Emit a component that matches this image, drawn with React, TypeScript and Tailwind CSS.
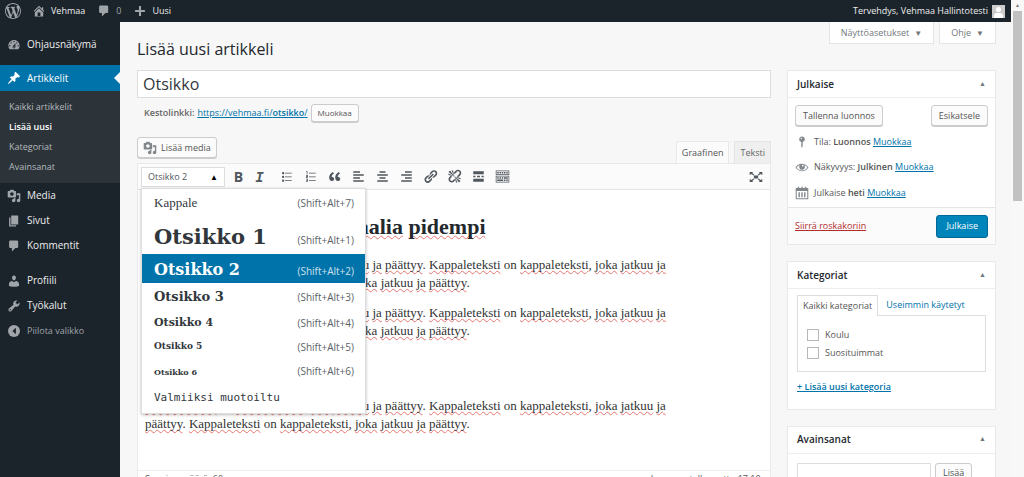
import type { ReactNode } from 'react'
import { FaCaretLeft } from 'react-icons/fa'

const icons = {
  wordpress:
    'M20 10c0-5.51-4.49-10-10-10C4.48 0 0 4.49 0 10c0 5.52 4.48 10 10 10 5.51 0 10-4.48 10-10zM7.78 15.37L4.37 6.22c.55-.02 1.17-.08 1.17-.08.5-.06.44-1.13-.06-1.11 0 0-1.45.11-2.37.11-.18 0-.37 0-.58-.01C4.12 2.69 6.87 1.11 10 1.11c2.33 0 4.45.87 6.05 2.34-.68-.11-1.65.39-1.65 1.58 0 .74.45 1.36.9 2.1.35.61.55 1.36.55 2.46 0 1.49-1.4 5-1.4 5l-3.03-8.37c.54-.02.82-.17.82-.17.5-.05.44-1.25-.06-1.22 0 0-1.44.12-2.38.12-.87 0-2.33-.12-2.33-.12-.5-.03-.56 1.2-.06 1.22l.92.08 1.26 3.41zM17.41 10c.24-.64.74-1.87.43-4.25.7 1.29 1.05 2.71 1.05 4.25 0 3.29-1.73 6.24-4.4 7.78.97-2.59 1.94-5.2 2.92-7.78zM6.1 18.09C3.12 16.65 1.11 13.53 1.11 10c0-1.3.23-2.48.72-3.59C3.25 10.3 4.67 14.2 6.1 18.09zm4.03-6.63l2.58 6.98c-.86.29-1.76.45-2.71.45-.79 0-1.57-.11-2.29-.33.81-2.38 1.62-4.74 2.42-7.1z',
  home: 'M16 8.5l1.53 1.53-1.06 1.06L10 4.6l-6.47 6.49-1.06-1.06L10 2.5l4 4v-2h2v4zm-6-2.46l6 5.99V18H4v-5.97zM12 17v-5H8v5h4z',
  comments: 'M5 2h9c1.1 0 2 .9 2 2v7c0 1.1-.9 2-2 2h-2l-5 5v-5H5c-1.1 0-2-.9-2-2V4c0-1.1.9-2 2-2z',
  plus: 'M17 8.5v3h-5.5V17h-3v-5.5H3v-3h5.5V3h3v5.5H17z',
  dashboard:
    'M3.76 16h12.48c1.1-1.37 1.76-3.11 1.76-5 0-4.42-3.58-8-8-8s-8 3.58-8 8c0 1.89.66 3.63 1.76 5zM10 4c.55 0 1 .45 1 1s-.45 1-1 1-1-.45-1-1 .45-1 1-1zM6 6c.55 0 1 .45 1 1s-.45 1-1 1-1-.45-1-1 .45-1 1-1zm8 0c.55 0 1 .45 1 1s-.45 1-1 1-1-.45-1-1 .45-1 1-1zm-5.37 5.55L12 7v6c0 1.1-.9 2-2 2s-2-.9-2-2c0-.57.24-1.08.63-1.45zM4 10c.55 0 1 .45 1 1s-.45 1-1 1-1-.45-1-1 .45-1 1-1zm12 0c.55 0 1 .45 1 1s-.45 1-1 1-1-.45-1-1 .45-1 1-1zm-5 3c0-.55-.45-1-1-1s-1 .45-1 1 .45 1 1 1 1-.45 1-1z',
  post: 'M10.44 3.02l1.82-1.82 6.36 6.35-1.83 1.82c-1.05-.68-2.48-.57-3.41.36l-.75.75c-.92.93-1.04 2.35-.35 3.41l-1.83 1.82-2.41-2.41-2.8 2.79c-.42.42-3.38 2.71-3.8 2.29s1.86-3.39 2.28-3.81l2.79-2.79L4.1 9.36l1.83-1.82c1.05.69 2.48.57 3.4-.36l.75-.75c.93-.92 1.05-2.35.36-3.41z',
  media:
    'M13 11V4c0-.55-.45-1-1-1h-1.67L9 1H5L3.67 3H2c-.55 0-1 .45-1 1v7c0 .55.45 1 1 1h10c.55 0 1-.45 1-1zM7 4.5c1.38 0 2.5 1.12 2.5 2.5S8.38 9.5 7 9.5 4.5 8.38 4.5 7 5.62 4.5 7 4.5zM14 6h5v10.5c0 1.38-1.12 2.5-2.5 2.5S14 17.88 14 16.5s1.12-2.5 2.5-2.5c.17 0 .34.02.5.05V9h-3V6zm-4 8.05V13h2v3.5c0 1.38-1.12 2.5-2.5 2.5S7 17.88 7 16.5 8.12 14 9.5 14c.17 0 .34.02.5.05z',
  page: 'M6 15V2h10v13H6zm-1 1h8v2H3V5h2v11z',
  users:
    'M10 9.25c-2.27 0-2.73-3.44-2.73-3.44C7 4.02 7.82 2 9.97 2c2.16 0 2.98 2.02 2.71 3.81 0 0-.41 3.44-2.68 3.44zm0 2.57L12.72 10c2.39 0 4.52 2.33 4.52 4.53v2.49s-3.65 1.13-7.24 1.13c-3.65 0-7.24-1.13-7.24-1.13v-2.49c0-2.25 1.94-4.48 4.47-4.48z',
  tools:
    'M16.68 9.77c-1.34 1.34-3.3 1.67-4.95.99l-5.41 6.52c-.99.99-2.59.99-3.58 0s-.99-2.59 0-3.57l6.52-5.42c-.68-1.65-.35-3.61.99-4.95 1.28-1.28 3.12-1.62 4.72-1.06l-2.89 2.89 2.82 2.82 2.86-2.87c.53 1.58.18 3.39-1.08 4.65zM3.81 16.21c.4.39 1.04.39 1.43 0 .4-.4.4-1.04 0-1.43-.39-.4-1.03-.4-1.43 0-.39.39-.39 1.03 0 1.43z',
  ul: 'M5.5 7C4.67 7 4 6.33 4 5.5 4 4.68 4.67 4 5.5 4 6.32 4 7 4.68 7 5.5 7 6.33 6.32 7 5.5 7zM8 5h9v1H8V5zm-2.5 7c-.83 0-1.5-.67-1.5-1.5C4 9.68 4.67 9 5.5 9c.82 0 1.5.68 1.5 1.5 0 .83-.68 1.5-1.5 1.5zM8 10h9v1H8v-1zm-2.5 7c-.83 0-1.5-.67-1.5-1.5 0-.82.67-1.5 1.5-1.5.82 0 1.5.68 1.5 1.5 0 .83-.68 1.5-1.5 1.5zM8 15h9v1H8v-1z',
  ol: 'M5 3h1v4H5V4H4V3zM8 5h9v1H8zM4 8h2.500v2.500H5v.5h1.500v1H4V9.500h1.500V9H4zM8 10h9v1H8zM4 13h2.500v4H4v-1h1.500v-.5H4.500v-1h1V14H4zM8 15h9v1H8z',
  quote:
    'M9.49 13.22c0-.74-.2-1.38-.61-1.9-.62-.78-1.83-.88-2.53-.72-.29-1.65 1.11-3.75 2.92-4.65L7.88 4c-2.73 1.3-5.42 4.28-4.96 8.05C3.21 14.43 4.59 16 6.54 16c.85 0 1.56-.25 2.12-.75s.83-1.18.83-2.03zm8.05 0c0-.74-.2-1.38-.61-1.9-.63-.78-1.83-.88-2.53-.72-.29-1.65 1.11-3.75 2.92-4.65L15.93 4c-2.73 1.3-5.41 4.28-4.95 8.05.29 2.38 1.66 3.95 3.61 3.95.85 0 1.56-.25 2.12-.75s.83-1.18.83-2.03z',
  alignLeft: 'M12 5V3H3v2h9zm5 4V7H3v2h14zm-5 4v-2H3v2h9zm5 4v-2H3v2h14z',
  alignCenter: 'M14 5V3H6v2h8zm3 4V7H3v2h14zm-3 4v-2H6v2h8zm3 4v-2H3v2h14z',
  alignRight: 'M17 5V3H8v2h9zm0 4V7H3v2h14zm0 4v-2H8v2h9zm0 4v-2H3v2h14z',
  link: 'M17.74 2.76c1.68 1.69 1.68 4.41 0 6.1l-1.53 1.52c-1.12 1.12-2.7 1.47-4.14 1.09l2.62-2.61.76-.77.76-.76c.84-.84.84-2.2 0-3.04-.84-.85-2.2-.85-3.04 0l-.77.76-3.38 3.38c-.37-1.44-.02-3.02 1.1-4.14l1.52-1.53c1.69-1.68 4.42-1.68 6.1 0zM8.59 13.43l5.34-5.34c.42-.42.42-1.1 0-1.52-.44-.43-1.13-.39-1.53 0l-5.33 5.34c-.42.42-.42 1.1 0 1.52.44.43 1.13.39 1.52 0zm-.76 2.29l4.14-4.15c.38 1.44.03 3.02-1.09 4.14l-1.52 1.53c-1.69 1.68-4.41 1.68-6.1 0-1.68-1.68-1.68-4.42 0-6.1l1.53-1.52c1.12-1.12 2.7-1.47 4.14-1.1l-4.14 4.15c-.85.84-.85 2.2 0 3.05.84.84 2.2.84 3.04 0z',
  unlink:
    'M17.74 2.26c1.68 1.69 1.68 4.41 0 6.1l-1.53 1.52c-.32.33-.69.58-1.08.77L13 10l1.69-1.64.76-.77.76-.76c.84-.84.84-2.2 0-3.04-.84-.85-2.2-.85-3.04 0l-.77.76-.76.76L10 7l-.65-2.14c.19-.38.44-.75.77-1.07l1.52-1.53c1.69-1.68 4.42-1.68 6.1 0zM2 4l8 6-6-8zm4-2l4 8-2-8H6zM2 6l8 4-8-2V6zm7.36 7.69L10 13l.74 2.35-1.38 1.39c-1.69 1.68-4.41 1.68-6.1 0-1.68-1.68-1.68-4.42 0-6.1l1.39-1.38L7 10l-.69.64-1.52 1.53c-.85.84-.85 2.2 0 3.04.84.85 2.2.85 3.04 0zM18 16l-8-6 6 8zm-4 2l-4-8 2 8h2zm4-4l-8-4 8 2v2z',
  more: 'M17 7V3H3v4h14zM6 11V9H3v2h3zm6 0V9H8v2h4zm5 0V9h-3v2h3zm0 6v-4H3v4h14z',
  kitchensink:
    'M19 2v6H1V2h18zm-1 5V3H2v4h16zM5 4v2H3V4h2zm3 0v2H6V4h2zm3 0v2H9V4h2zm3 0v2h-2V4h2zm3 0v2h-2V4h2zm2 5v9H1V9h18zm-1 8v-7H2v7h16zM5 11v2H3v-2h2zm3 0v2H6v-2h2zm3 0v2H9v-2h2zm6 0v2h-5v-2h5zm-6 3v2H3v-2h8zm3 0v2h-2v-2h2zm3 0v2h-2v-2h2z',
  fullscreen:
    'M7 8h6v4H7zM1 3h5L4.600 4.400 7.500 6.800 6.500 8 3.300 5.600 1 7zM19 3h-5l1.400 1.400-2.900 2.400 1 1.200 3.200-2.400L19 7zM1 17h5l-1.400-1.400 2.900-2.400-1-1.200-3.200 2.400L1 13zM19 17h-5l1.400-1.400-2.900-2.400 1-1.200 3.200 2.400L19 13z',
  status:
    'M14 6c0 1.860-1.280 3.410-3 3.860V16c0 1-2 2-2 2V9.860c-1.720-.45-3-2-3-3.860 0-2.210 1.790-4 4-4s4 1.790 4 4zM8 5c0 .55.45 1 1 1s1-.45 1-1-.45-1-1-1-1 .45-1 1z',
  visibility:
    'M18.3 9.500C15 4.900 8.500 3.800 3.900 7.200c-1.200.9-2.200 2.100-3 3.400.2.4.5.8.8 1.200 3.300 4.600 9.600 5.600 14.200 2.400.9-.7 1.700-1.400 2.400-2.400.3-.4.5-.8.8-1.200-.3-.4-.5-.8-.8-1.100zm-8.200-2.300c.5-.5 1.300-.5 1.800 0s.5 1.300 0 1.800-1.300.5-1.800 0-.5-1.300 0-1.800zm-.1 7.700c-3.100 0-6-1.600-7.700-4.200C3.500 9 5.100 7.800 7 7.200c-.7.8-1 1.700-1 2.700 0 2.200 1.700 4.100 4 4.100 2.200 0 4.100-1.700 4.100-4v-.1c0-1-.4-2-1.100-2.700 1.900.6 3.500 1.800 4.700 3.500-1.700 2.600-4.600 4.200-7.700 4.200z',
  calendar:
    'M4 1h2v2h3V1h2v2h3V1h2v2h3v16H1V3h3zM2.500 7v10.500h15V7zM5 9h2v7H5zM9 9h2v7H9zM13 9h2v7h-2z',
}

type IconName = keyof typeof icons

function Icon({ name, className }: { name: IconName; className: string }) {
  return (
    <svg viewBox="0 0 20 20" fill="currentColor" fillRule="evenodd" aria-hidden="true" className={`shrink-0 ${className}`}>
      <path d={icons[name]} />
    </svg>
  )
}

const subMenu = [
  { label: 'Kaikki artikkelit' },
  { label: 'Lisää uusi', current: true },
  { label: 'Kategoriat' },
  { label: 'Avainsanat' },
]

const formats = [
  { label: 'Kappale', keys: '(Shift+Alt+7)', row: 'h-[28px] items-center', text: 'font-[Liberation_Serif,serif] text-[13px]' },
  { label: 'Otsikko 1', keys: '(Shift+Alt+1)', row: 'h-[37px] items-baseline pt-[4px]', text: 'font-[DejaVu_Serif,serif] font-bold text-[21px]' },
  { label: 'Otsikko 2', keys: '(Shift+Alt+2)', row: 'h-[29px] items-baseline pt-[4px] bg-[#0073aa] text-white', text: 'font-[DejaVu_Serif,serif] font-bold text-[16px]' },
  { label: 'Otsikko 3', keys: '(Shift+Alt+3)', row: 'h-[28px] items-center', text: 'font-[DejaVu_Serif,serif] font-bold text-[13px]' },
  { label: 'Otsikko 4', keys: '(Shift+Alt+4)', row: 'h-[24px] items-center', text: 'font-[DejaVu_Serif,serif] font-bold text-[11px]' },
  { label: 'Otsikko 5', keys: '(Shift+Alt+5)', row: 'h-[24px] items-center', text: 'font-[DejaVu_Serif,serif] font-bold text-[9px]' },
  { label: 'Otsikko 6', keys: '(Shift+Alt+6)', row: 'h-[25px] items-center', text: 'font-[DejaVu_Serif,serif] font-bold text-[8px]' },
]

const tools: IconName[] = ['ul', 'ol', 'quote', 'alignLeft', 'alignCenter', 'alignRight', 'link', 'unlink', 'more', 'kitchensink']

function MenuItem({ icon, label }: { icon: IconName; label: string }) {
  return (
    <li>
      <a href="#" className="flex h-[25px] items-center gap-[6px] pl-[7px] text-[10px] text-[#eee]">
        <Icon name={icon} className="size-[14px] text-[#a0a5aa]" />
        {label}
      </a>
    </li>
  )
}

// Underlines every word the spell checker does not know
function Spelled({ text }: { text: string }) {
  return (
    <>
      {text.split(/([^\s.,]+)/).map((part, i) =>
        i % 2 === 1 && part !== 'on' ? (
          <span key={i} className="underline decoration-[#e87474] decoration-wavy decoration-1 underline-offset-1 [text-decoration-skip-ink:none]">
            {part}
          </span>
        ) : (
          part
        )
      )}
    </>
  )
}

function Panel({ title, children }: { title: string; children: ReactNode }) {
  return (
    <section className="border border-[#e9e9e9] bg-white">
      <header className="flex h-[27px] items-center justify-between border-b border-[#eee] px-[9px]">
        <h2 className="text-[10px] font-semibold text-[#23282d]">{title}</h2>
        <button aria-label="Näytä tai piilota" className="text-[7px] text-[#72777c]">▲</button>
      </header>
      {children}
    </section>
  )
}

const button = 'rounded-[3px] border border-[#ccc] bg-[#fbfbfb] text-[#555] shadow-[0_1px_0_#ccc]'
const link = 'text-[#0073aa] underline'
const body =
  'Kappaleteksti on kappaleteksti, joka jatkuu ja päättyy. Kappaleteksti on kappaleteksti, joka jatkuu ja päättyy. Kappaleteksti on kappaleteksti, joka jatkuu ja päättyy.'

function AdminBar() {
  return (
    <header className="flex h-[22px] shrink-0 items-center bg-[#1b232b] px-[5px] text-[9px] text-[#eee]">
      <Icon name="wordpress" className="size-4 text-[#a0a5aa]" />
      <a href="#" className="ml-[11px] flex items-center gap-[5px]">
        <Icon name="home" className="size-[14px] text-[#a0a5aa]" />
        Vehmaa
      </a>
      <a href="#" className="ml-3 flex items-center gap-[5px] text-[#a0a5aa]">
        <Icon name="comments" className="size-[14px]" />0
      </a>
      <a href="#" className="ml-3 flex items-center gap-[5px]">
        <Icon name="plus" className="size-[14px] text-[#a0a5aa]" />
        Uusi
      </a>
      <a href="#" className="ml-auto flex items-center gap-1">
        Tervehdys, Vehmaa Hallintotesti
        <svg viewBox="0 0 13 13" className="mr-[1px] size-[13px] bg-[#ccc]" aria-hidden="true">
          <circle cx="6.500" cy="4.500" r="2.500" fill="#fff" />
          <path d="M2 13v-2c0-2 1-3 3-3h3c2 0 3 1 3 3v2z" fill="#fff" />
        </svg>
      </a>
    </header>
  )
}

function Sidebar() {
  return (
    <nav className="w-[120px] shrink-0 bg-[#1b232b] pt-[10px]">
      <ul>
        <MenuItem icon="dashboard" label="Ohjausnäkymä" />
        <li className="mt-2">
          <a href="#" className="relative flex h-[26px] items-center gap-[6px] bg-[#0073aa] pl-[7px] text-[10px] text-white">
            <Icon name="post" className="size-[14px]" />
            Artikkelit
            <span className="absolute top-[7px] right-0 border-y-[6px] border-r-[6px] border-y-transparent border-r-[#f7f7f7]" />
          </a>
          <ul className="bg-[#2c343a] py-[6px] text-[9px]">
            {subMenu.map((item) => (
              <li key={item.label}>
                <a href="#" className={`flex h-5 items-center pl-[9px] ${item.current ? 'font-semibold text-white' : 'text-[#b4b9be]'}`}>
                  {item.label}
                </a>
              </li>
            ))}
          </ul>
        </li>
        <MenuItem icon="media" label="Media" />
        <MenuItem icon="page" label="Sivut" />
        <MenuItem icon="comments" label="Kommentit" />
      </ul>
      <ul className="mt-[10px]">
        <MenuItem icon="users" label="Profiili" />
        <MenuItem icon="tools" label="Työkalut" />
        <li>
          <button className="flex h-[26px] items-center gap-[6px] pl-[7px] text-[9px] text-[#a0a5aa]">
            <span className="flex size-3 mx-px items-center justify-center rounded-full bg-[#a0a5aa] text-[#1b232b]">
              <FaCaretLeft className="size-[10px]" />
            </span>
            Piilota valikko
          </button>
        </li>
      </ul>
    </nav>
  )
}

function FormatMenu() {
  return (
    <div role="menu" className="absolute top-6 left-[3px] z-10 w-[225px] border border-[#ddd] bg-white text-[#32373c] shadow-[0_1px_3px_rgba(0,0,0,0.25)]">
      {formats.map((item) => (
        <button key={item.label} role="menuitem" className={`flex w-full justify-between pr-[11px] pl-3 ${item.row}`}>
          <span className={item.text}>{item.label}</span>
          <span className="text-[10px] opacity-80">{item.keys}</span>
        </button>
      ))}
      <button role="menuitem" className="flex h-[29px] w-full items-center pl-3 font-[DejaVu_Sans_Mono,monospace] text-[11px]">
        Valmiiksi muotoiltu
      </button>
    </div>
  )
}

function Editor() {
  return (
    <div className="min-w-0 flex-1">
      <input aria-label="Otsikko" defaultValue="Otsikko" className="block h-[28px] w-full border border-[#ddd] bg-white px-[5px] text-[16px] text-[#32373c]" />
      <div className="mt-[6px] flex h-[18px] items-center gap-[3px] pl-[7px] text-[9px] text-[#666]">
        <strong className="font-semibold">Kestolinkki:</strong>
        <a href="#" className={link}>
          https://vehmaa.fi/<b className="font-semibold">otsikko</b>/
        </a>
        <button className={`h-[18px] px-[6px] text-[8px] ${button}`}>Muokkaa</button>
      </div>
      <div className="mt-[15px] flex items-start justify-between">
        <button className={`flex h-[21px] items-center gap-1 px-[5px] text-[9px] ${button}`}>
          <Icon name="media" className="size-[14px] text-[#82878c]" />
          Lisää media
        </button>
        <div className="flex gap-[5px] pt-1 text-[9px] text-[#555]">
          <button className="h-[22px] border border-b-0 border-[#e9e9e9] bg-[#fbfbfb] px-[5px]">Graafinen</button>
          <button className="h-[22px] border border-b-0 border-[#e5e5e5] bg-[#efefef] px-[5px] text-[#666]">Teksti</button>
        </div>
      </div>
      <div className="border border-[#e9e9e9] bg-white">
        <div className="relative flex h-[26px] items-center border-b border-[#e5e5e5] bg-[#fbfbfb] pl-[3px] text-[#50575e]">
          <button className="flex h-[20px] w-[84px] items-center justify-between border border-[#ddd] bg-white px-[6px] text-[9px]">
            Otsikko 2<span className="text-[8px] text-black">▲</span>
          </button>
          <div className="flex flex-1 items-center">
            <button className="w-6 pl-[3px] text-[14px] font-bold">B</button>
            <button className="w-[21px] pt-[3px] font-[Liberation_Mono,monospace] text-[14px] font-bold italic">I</button>
            {tools.map((name) => (
              <button key={name} aria-label={name} className="flex w-6 justify-end">
                <Icon name={name} className="size-[15px]" />
              </button>
            ))}
          </div>
          <button aria-label="Koko näyttö" className="mr-[7px]">
            <Icon name="fullscreen" className="size-[14px]" />
          </button>
          <FormatMenu />
        </div>
        <div className="h-[280px] px-[7px] pt-[25px] font-[Liberation_Serif,serif] text-[13px] leading-[18px] text-[#333]">
          <div className="max-w-[560px]">
            <h2 className="mb-[17px] text-[22px] leading-6 font-bold text-[#23282d]">
              <Spelled text="Otsikko, joka on normaalia pidempi" />
            </h2>
            <p className="mb-3"><Spelled text={body} /></p>
            <p className="mb-3"><Spelled text={body} /></p>
            <p className="mb-3 h-[33px]">&nbsp;</p>
            <p><Spelled text={body} /></p>
          </div>
        </div>
        <footer className="flex items-center justify-between border-t border-[#eee] px-[7px] text-[9px] leading-4 text-[#555]">
          <span>Sanojen määrä: 60</span>
          <span>Luonnos tallennettu 17:10.</span>
        </footer>
      </div>
    </div>
  )
}

function Panels() {
  return (
    <aside className="flex w-[209px] shrink-0 flex-col gap-4 text-[9px] text-[#555]">
      <Panel title="Julkaise">
        <div className="flex justify-between px-[7px] pt-[7px]">
          <button className={`h-[21px] px-[7px] ${button}`}>Tallenna luonnos</button>
          <button className={`h-[21px] px-[7px] ${button}`}>Esikatsele</button>
        </div>
        <ul className="px-[7px] pt-[3px] pb-[2px]">
          <li className="flex h-[25px] items-center gap-[5px]">
            <Icon name="status" className="size-[14px] text-[#82878c]" />
            <span>Tila: <b className="font-semibold">Luonnos</b> <a href="#" className={link}>Muokkaa</a></span>
          </li>
          <li className="flex h-[26px] items-center gap-[5px]">
            <Icon name="visibility" className="size-[14px] text-[#82878c]" />
            <span>Näkyvyys: <b className="font-semibold">Julkinen</b> <a href="#" className={link}>Muokkaa</a></span>
          </li>
          <li className="flex h-[25px] items-center gap-[5px]">
            <Icon name="calendar" className="size-[14px] text-[#82878c]" />
            <span>Julkaise <b className="font-semibold">heti</b> <a href="#" className={link}>Muokkaa</a></span>
          </li>
        </ul>
        <div className="flex h-[37px] items-center justify-between border-t border-[#e5e5e5] bg-[#fbfbfb] px-[7px]">
          <a href="#" className="text-[#b32d2e] underline">Siirrä roskakoriin</a>
          <button className="h-[23px] rounded-[3px] border border-[#006799] bg-[#0085ba] px-[9px] text-white">Julkaise</button>
        </div>
      </Panel>
      <Panel title="Kategoriat">
        <div className="px-[9px] pt-[6px] pb-[15px]">
          <div className="flex">
            <button className="-mb-px h-[21px] border border-b-0 border-[#ddd] bg-white px-[5px]">Kaikki kategoriat</button>
            <button className="px-[8px] text-[#0073aa]">Useimmin käytetyt</button>
          </div>
          <div className="h-[57px] border border-[#ddd] px-[9px] pt-[10px]">
            {['Koulu', 'Suosituimmat'].map((name) => (
              <label key={name} className="flex h-[18px] items-center gap-[6px]">
                <input type="checkbox" className="size-3 appearance-none border border-[#b4b9be] bg-white" />
                {name}
              </label>
            ))}
          </div>
          <a href="#" className={`mt-2 block font-semibold ${link}`}>+ Lisää uusi kategoria</a>
        </div>
      </Panel>
      <Panel title="Avainsanat">
        <div className="flex gap-[4px] px-[9px] pt-[9px] pb-4">
          <input aria-label="Avainsanat" className="h-[20px] w-[134px] border border-[#ddd]" />
          <button className={`h-[20px] px-[7px] ${button}`}>Lisää</button>
        </div>
      </Panel>
    </aside>
  )
}

export default function App() {
  return (
    <div className="flex h-screen overflow-hidden bg-[#f7f7f7] font-[Open_Sans,sans-serif] leading-normal">
      <div className="flex min-w-0 flex-1 flex-col">
        <AdminBar />
        <div className="flex min-h-0 flex-1">
          <Sidebar />
          <main className="min-w-0 flex-1 pr-[15px] pl-[17px]">
            <div className="flex h-[48px] items-start justify-between">
              <h1 className="pt-[15px] text-[16px] text-[#23282d]">Lisää uusi artikkeli</h1>
              <div className="flex gap-[5px] text-[9px] text-[#72777c]">
                <button className="flex h-[22px] items-center gap-[5px] border border-t-0 border-[#e5e5e5] bg-white px-[11px]">
                  Näyttöasetukset<span className="text-[8px]">▼</span>
                </button>
                <button className="flex h-[22px] items-center gap-[5px] border border-t-0 border-[#e5e5e5] bg-white px-[11px]">
                  Ohje<span className="text-[8px]">▼</span>
                </button>
              </div>
            </div>
            <div className="flex items-start gap-4">
              <Editor />
              <Panels />
            </div>
          </main>
        </div>
      </div>
      <div className="w-[13px] shrink-0 bg-[#f8f8f8] px-[2px] text-center" aria-hidden="true">
        <div className="h-[11px] text-[5px] leading-[11px] text-[#777]">▲</div>
        <div className="h-[190px] bg-[#c1c1c1]" />
      </div>
    </div>
  )
}
